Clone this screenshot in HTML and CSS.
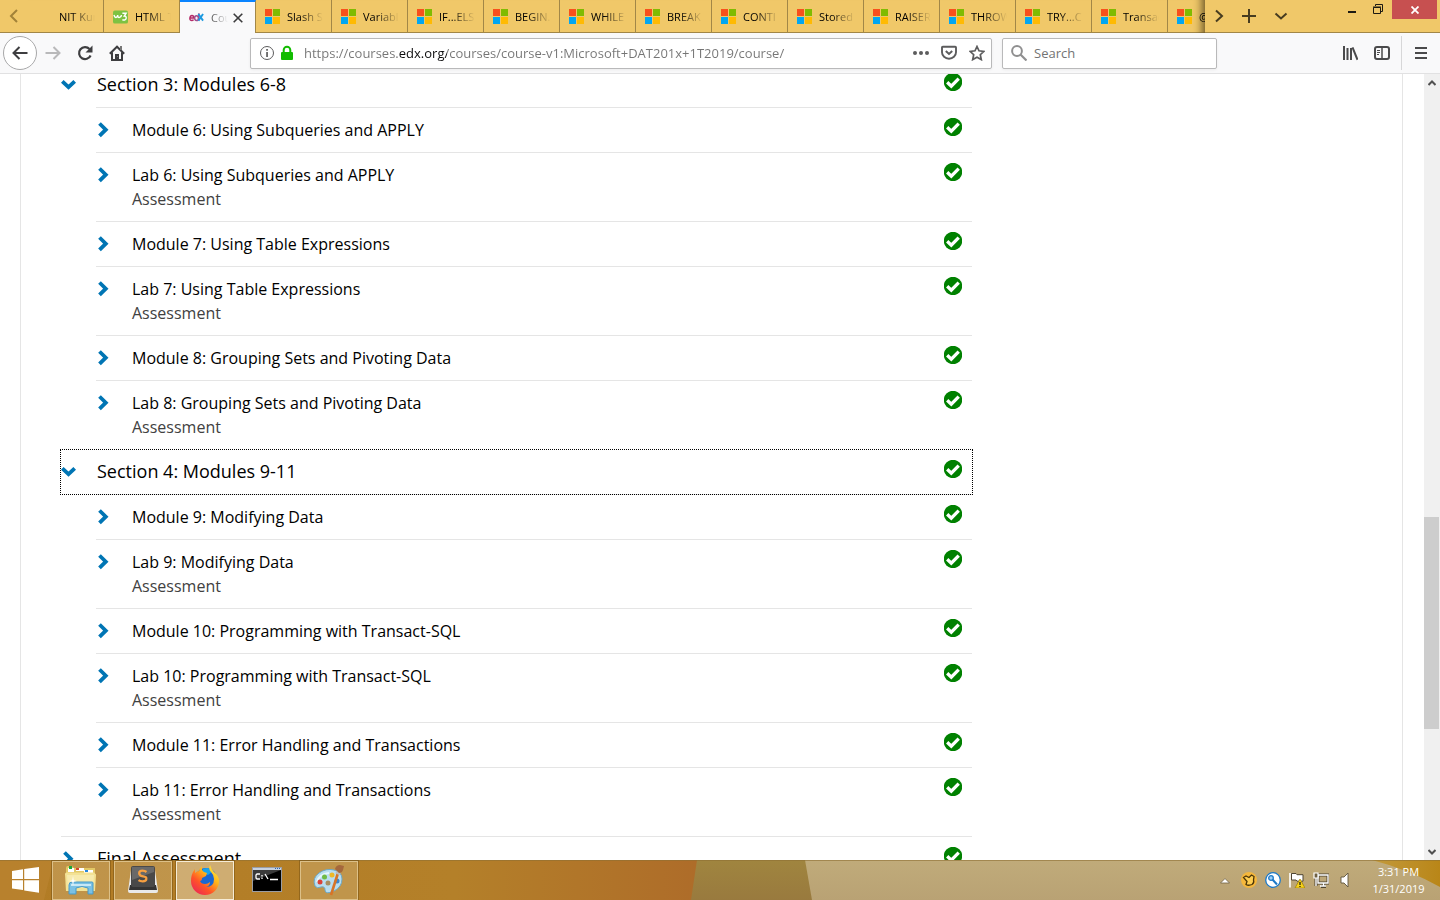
FILE: index.html
```html
<!DOCTYPE html>
<html lang="en">
<head>
<meta charset="utf-8">
<title>Course | edX</title>
<link rel="stylesheet" href="styles.css">
</head>
<body>
<svg class="sprite" aria-hidden="true">
  <symbol id="ms" viewBox="0 0 15 15"><path fill="#f8501c" d="M0 0h7v7H0z"/><path fill="#80bb01" d="M8 0h7v7H8z"/><path fill="#02a6f0" d="M0 8h7v7H0z"/><path fill="#ffba02" d="M8 8h7v7H8z"/></symbol>
  <symbol id="right" viewBox="0 0 16 16"><path d="M3.500 1.500 9.800 7.700l-6.300 6.200" fill="none" stroke="#0075b4" stroke-width="3.800"/></symbol>
  <symbol id="down" viewBox="0 0 16 16"><path d="M1.300 4.300 7.500 10.200 13.700 4.300" fill="none" stroke="#0075b4" stroke-width="3.800"/></symbol>
  <symbol id="ok" viewBox="0 0 18 18"><circle cx="9" cy="9" r="9.200" fill="#008100"/><path d="M3.200 9.200 7.300 13.200l7.400-7.600" fill="none" stroke="#fff" stroke-width="3.300"/></symbol>
</svg>

<header class="tabbar">
  <button class="scroll-left" aria-label="Scroll tabs left"><svg width="10" height="14" viewBox="0 0 10 14"><path d="M8 1 2 7l6 6" fill="none" stroke="#a28238" stroke-width="2"/></svg></button>
  <nav class="tabs" aria-label="Tabs">
    <a class="tab" href="#"><span class="favicon"></span><span class="tab-title">NIT Kur</span></a>
    <a class="tab" href="#"><svg class="favicon" viewBox="0 0 16 15"><rect y="1" width="16" height="14" rx="2" fill="#7dc242"/><path d="M1 6q1 3 2.500 2.500T5 6q0 3 2 2.500T9 6M10 4h4l-2 3q2.500 0 2 2.500t-4 1.500" fill="none" stroke="#fff" stroke-width="1.500"/></svg><span class="tab-title">HTML T</span></a>
    <a class="tab active" href="#"><svg class="favicon" viewBox="0 0 16 15"><g fill="none" stroke-width="1.600"><path d="M1 8h4.200Q5 5.300 3.200 5.300T1 8t2.200 2.700L5 10" stroke="#b52a67"/><path d="M10.500 3v8M10 8q0-2.500-2-2.500T6 8t2 2.700 2-2.700" stroke="#a0508f"/><path d="m10 3.800 5 7M15 3.800l-5 7" stroke="#1c9ae0" stroke-width="2"/></g></svg><span class="tab-title">Cou</span><svg class="close-tab" viewBox="0 0 10 10"><path d="m.7.700 8.600 8.600M9.300.700.700 9.300" stroke="#3b3b3c" stroke-width="1.600"/></svg></a>
    <a class="tab" href="#"><svg class="favicon"><use href="#ms"/></svg><span class="tab-title">Slash S</span></a>
    <a class="tab" href="#"><svg class="favicon"><use href="#ms"/></svg><span class="tab-title">Variabl</span></a>
    <a class="tab" href="#"><svg class="favicon"><use href="#ms"/></svg><span class="tab-title">IF...ELS</span></a>
    <a class="tab" href="#"><svg class="favicon"><use href="#ms"/></svg><span class="tab-title">BEGIN.</span></a>
    <a class="tab" href="#"><svg class="favicon"><use href="#ms"/></svg><span class="tab-title">WHILE</span></a>
    <a class="tab" href="#"><svg class="favicon"><use href="#ms"/></svg><span class="tab-title">BREAK</span></a>
    <a class="tab" href="#"><svg class="favicon"><use href="#ms"/></svg><span class="tab-title">CONTI</span></a>
    <a class="tab" href="#"><svg class="favicon"><use href="#ms"/></svg><span class="tab-title">Stored</span></a>
    <a class="tab" href="#"><svg class="favicon"><use href="#ms"/></svg><span class="tab-title">RAISER</span></a>
    <a class="tab" href="#"><svg class="favicon"><use href="#ms"/></svg><span class="tab-title">THROW</span></a>
    <a class="tab" href="#"><svg class="favicon"><use href="#ms"/></svg><span class="tab-title">TRY...C</span></a>
    <a class="tab" href="#"><svg class="favicon"><use href="#ms"/></svg><span class="tab-title">Transac</span></a>
    <a class="tab" href="#"><svg class="favicon"><use href="#ms"/></svg><span class="tab-title">@</span></a>
  </nav>
  <div class="tab-tools">
    <button aria-label="Scroll tabs right"><svg width="14" height="14" viewBox="0 0 14 14"><path d="m4 1.500 6 5.500-6 5.500" fill="none" stroke="#473c20" stroke-width="2"/></svg></button>
    <button aria-label="New tab"><svg width="14" height="14" viewBox="0 0 14 14"><path d="M7 0v14M0 7h14" stroke="#473c20" stroke-width="2"/></svg></button>
    <button aria-label="List all tabs"><svg width="14" height="14" viewBox="0 0 14 14"><path d="m1.500 4.500 5.500 5 5.500-5" fill="none" stroke="#473c20" stroke-width="2"/></svg></button>
  </div>
  <div class="window-tools">
    <button aria-label="Minimize"><svg width="10" height="19" viewBox="0 0 10 19"><path d="M1 11h8v2H1z" fill="#1d1a12"/></svg></button>
    <button aria-label="Restore"><svg width="10" height="19" viewBox="0 0 10 19"><path d="M.5 7.500h7v6h-7zM0 7h8M2.500 6V4.500h7v7H8" fill="none" stroke="#1d1a12"/></svg></button>
    <button class="close" aria-label="Close"><svg width="8" height="8" viewBox="0 0 8 8"><path d="m.5.500 7 7m0-7-7 7" stroke="#fff" stroke-width="1.800"/></svg></button>
  </div>
</header>

<div class="toolbar">
  <button class="tool back" aria-label="Back"><svg width="16" height="16" viewBox="0 0 16 16"><path d="M15.500 8H1.500M7.500 2l-6 6 6 6" fill="none" stroke="#3e3e40" stroke-width="2"/></svg></button>
  <button class="tool" aria-label="Forward" disabled><svg width="16" height="16" viewBox="0 0 16 16"><path d="M.5 8h14M8.500 2l6 6-6 6" fill="none" stroke="#b9b9ba" stroke-width="2"/></svg></button>
  <button class="tool" aria-label="Reload"><svg width="16" height="16" viewBox="0 0 16 16"><path d="M12.500 4A6 6 0 1 0 13.600 10.500" fill="none" stroke="#3e3e40" stroke-width="2.200"/><path d="M15.500.5v7h-7z" fill="#3e3e40"/></svg></button>
  <button class="tool" aria-label="Home"><svg width="16" height="16" viewBox="0 0 16 16"><path d="m.8 8.700 7.200-7 7.200 7M3 7.500v7.400h10V7.500" fill="none" stroke="#3e3e40" stroke-width="2"/><path d="M6 9h4v6H6z" fill="#3e3e40"/><path d="M8 11h1v1H8zM11 1h2v4h-2z" fill="#777"/></svg></button>
  <span class="spacer"></span>
  <div class="field address">
    <svg width="16" height="16" viewBox="0 0 16 16"><circle cx="8" cy="8" r="6.500" fill="none" stroke="#5c5c5d"/><path d="M7.200 7h1.700v5H7.200zM7.200 4h1.700v1.700H7.200z" fill="#5c5c5d"/></svg>
    <svg width="14" height="16" viewBox="0 0 14 16"><rect x="1" y="7" width="12" height="8" rx="1" fill="#12bc00"/><path d="M3.700 8V5a3.300 3.300 0 0 1 6.600 0v3" fill="none" stroke="#12bc00" stroke-width="2"/></svg>
    <input class="url" aria-label="Address" value="https://courses.edx.org/courses/course-v1:Microsoft+DAT201x+1T2019/course/">
    <button aria-label="Page actions"><svg width="16" height="16" viewBox="0 0 16 16"><g fill="#5c5c5d"><circle cx="2" cy="8" r="2"/><circle cx="8" cy="8" r="2"/><circle cx="14" cy="8" r="2"/></g></svg></button>
    <button aria-label="Save to Pocket"><svg width="16" height="16" viewBox="0 0 16 16"><path d="M1.800 1.800h12.400q.8 0 .8.800v4.600a7 6.500 0 0 1-14 0V2.600q0-.8.800-.8z" fill="none" stroke="#5c5c5d" stroke-width="1.900"/><path d="M4.800 6 8 9l3.200-3" fill="none" stroke="#5c5c5d" stroke-width="2"/></svg></button>
    <button aria-label="Bookmark"><svg width="16" height="16" viewBox="0 0 16 16"><path d="m8 1.500 2 4.300 4.900.6-3.600 3.300 1 4.900L8 12.200l-4.300 2.400 1-4.900L1.100 6.400 6 5.800z" fill="none" stroke="#5c5c5d" stroke-width="1.700"/></svg></button>
  </div>
  <div class="field search">
    <svg width="16" height="16" viewBox="0 0 16 16"><circle cx="6" cy="6" r="4.900" fill="none" stroke="#8f8f90" stroke-width="2"/><path d="m9.500 9.500 6 6" stroke="#8f8f90" stroke-width="2.200"/></svg>
    <input type="text" aria-label="Search" placeholder="Search">
  </div>
  <span class="spacer"></span>
  <button class="tool" aria-label="Library"><svg width="16" height="16" viewBox="0 0 16 16"><path d="M2 1v14M5.500 3v12M9 3v12M10.500 2.300l5 12.500" stroke="#4a4a4b" stroke-width="2"/></svg></button>
  <button class="tool" aria-label="Sidebars"><svg width="16" height="16" viewBox="0 0 16 16"><rect x="1" y="2" width="14" height="12" rx="2" fill="none" stroke="#4a4a4b" stroke-width="2"/><path d="M8 2v12" stroke="#4a4a4b" stroke-width="1.500"/><path d="M3 5.500h3M3 7.500h3M3 9.500h2" stroke="#4a4a4b"/></svg></button>
  <button class="tool menu" aria-label="Menu"><svg width="12" height="12" viewBox="0 0 12 12"><path d="M0 1h12M0 6h12M0 11h12" stroke="#4a4a4b" stroke-width="2"/></svg></button>
</div>

<div class="viewport">
  <main class="page">
    <ol class="outline">
      <li>
        <button class="section"><svg class="chev"><use href="#down"/></svg><span class="label">Section 3: Modules 6-8</span><svg class="ok"><use href="#ok"/></svg></button>
        <ol class="rows">
          <li><a class="row" href="#"><svg class="chev"><use href="#right"/></svg><span class="label">Module 6: Using Subqueries and APPLY</span><svg class="ok"><use href="#ok"/></svg></a></li>
          <li><a class="row" href="#"><svg class="chev"><use href="#right"/></svg><span class="label">Lab 6: Using Subqueries and APPLY<small>Assessment</small></span><svg class="ok"><use href="#ok"/></svg></a></li>
          <li><a class="row" href="#"><svg class="chev"><use href="#right"/></svg><span class="label">Module 7: Using Table Expressions</span><svg class="ok"><use href="#ok"/></svg></a></li>
          <li><a class="row" href="#"><svg class="chev"><use href="#right"/></svg><span class="label">Lab 7: Using Table Expressions<small>Assessment</small></span><svg class="ok"><use href="#ok"/></svg></a></li>
          <li><a class="row" href="#"><svg class="chev"><use href="#right"/></svg><span class="label">Module 8: Grouping Sets and Pivoting Data</span><svg class="ok"><use href="#ok"/></svg></a></li>
          <li><a class="row" href="#"><svg class="chev"><use href="#right"/></svg><span class="label">Lab 8: Grouping Sets and Pivoting Data<small>Assessment</small></span><svg class="ok"><use href="#ok"/></svg></a></li>
        </ol>
      </li>
      <li>
        <button class="section focused"><svg class="chev"><use href="#down"/></svg><span class="label">Section 4: Modules 9-11</span><svg class="ok"><use href="#ok"/></svg></button>
        <ol class="rows">
          <li><a class="row" href="#"><svg class="chev"><use href="#right"/></svg><span class="label">Module 9: Modifying Data</span><svg class="ok"><use href="#ok"/></svg></a></li>
          <li><a class="row" href="#"><svg class="chev"><use href="#right"/></svg><span class="label">Lab 9: Modifying Data<small>Assessment</small></span><svg class="ok"><use href="#ok"/></svg></a></li>
          <li><a class="row" href="#"><svg class="chev"><use href="#right"/></svg><span class="label">Module 10: Programming with Transact-SQL</span><svg class="ok"><use href="#ok"/></svg></a></li>
          <li><a class="row" href="#"><svg class="chev"><use href="#right"/></svg><span class="label">Lab 10: Programming with Transact-SQL<small>Assessment</small></span><svg class="ok"><use href="#ok"/></svg></a></li>
          <li><a class="row" href="#"><svg class="chev"><use href="#right"/></svg><span class="label">Module 11: Error Handling and Transactions</span><svg class="ok"><use href="#ok"/></svg></a></li>
          <li><a class="row" href="#"><svg class="chev"><use href="#right"/></svg><span class="label">Lab 11: Error Handling and Transactions<small>Assessment</small></span><svg class="ok"><use href="#ok"/></svg></a></li>
        </ol>
      </li>
      <li>
        <button class="section"><svg class="chev"><use href="#right"/></svg><span class="label">Final Assessment</span><svg class="ok"><use href="#ok"/></svg></button>
      </li>
    </ol>
  </main>
  <div class="scrollbar">
    <svg class="arrow" viewBox="0 0 8 6"><path d="M.5 5 4 1.500 7.500 5" fill="none" stroke="#505050" stroke-width="2"/></svg>
    <div class="track"><div class="thumb"></div></div>
    <svg class="arrow" viewBox="0 0 8 6"><path d="M.5 1 4 4.500 7.500 1" fill="none" stroke="#505050" stroke-width="2"/></svg>
  </div>
</div>

<footer class="taskbar">
  <svg class="wallpaper" viewBox="0 0 1440 40" preserveAspectRatio="none" aria-hidden="true">
    <defs>
      <linearGradient id="w1"><stop offset="0" stop-color="#b27c25"/><stop offset=".65" stop-color="#b48029"/><stop offset="1" stop-color="#ae6c29"/></linearGradient>
      <linearGradient id="w2" x2="0" y2="1"><stop offset="0" stop-color="#a0853f"/><stop offset="1" stop-color="#997a3e"/></linearGradient>
      <linearGradient id="w3" x2="0" y2="1"><stop offset="0" stop-color="#c0ab7a"/><stop offset="1" stop-color="#b9a274"/></linearGradient>
      <linearGradient id="w4"><stop offset="0" stop-color="#c39a3c"/><stop offset="1" stop-color="#b98618"/></linearGradient>
    </defs>
    <path fill="url(#w1)" d="M0 0h700v40H0z"/>
    <path fill="#c18a3a" opacity=".4" d="M0 0h54L44 40H0z"/>
    <path fill="url(#w2)" d="M697 0h120v40H691z"/>
    <path fill="url(#w3)" d="M805 0h635v40H812z"/>
    <path fill="url(#w4)" d="M1372 0h68v27q-30-17-68-27z"/>
    <path fill="#8e6f33" d="M0 0h1440v1H0z" opacity=".6"/>
  </svg>
  <button class="start" aria-label="Start"><svg width="28" height="26" viewBox="0 0 28 26"><path d="m0 4 11-1.700V12H0zM12.200 2 27 0v12H12.200zM0 13.200h11v9.700L0 21.500zM12.200 13.200H27v12.600l-14.800-2.400z" fill="#fff"/></svg></button>
  <button class="app open" aria-label="File Explorer"><svg width="34" height="32" viewBox="0 0 34 32"><path d="M2 4q0-2 2-2h4l2 2h21v22H2z" fill="#e2c866"/><path d="M4 4h6v4H4z" fill="#fff"/><path d="M5 2h3v3H5z" fill="#18a83c"/><path d="M12 4h8v3h-8z" fill="#fff"/><path d="M12 4h3v2h-3z" fill="#d9442b"/><path d="M20 6h9v3h-9z" fill="#fff"/><path d="M21 6h3v2h-3z" fill="#2688dc"/><path d="M1 10q0-1.500 1.500-1.500H30l2 2L31 27H2z" fill="#f3e295"/><path d="M3 11h27l-1 13H4z" fill="#f7ebae"/><path d="M8 18h20q1 0 1 1v11h-5v-6q-6-3-12 0v6H5v-9q0-3 3-3z" fill="#7bc1e4" stroke="#4799c8"/><path d="M7 20h20v2H7z" fill="#c8e8f6"/><path d="m9 12 .7 4.300L13 17l-3.300.7L9 22l-.7-4.300L5 17l3.300-.7z" fill="#fff"/></svg></button>
  <button class="app open" aria-label="Sublime Text"><svg width="32" height="32" viewBox="0 0 32 32"><path d="M4 6h24l3 21q0 2-2 2H3q-2 0-2-2z" fill="#e9e9e9"/><path d="M3 21h26l1 5H2z" fill="#343434"/><rect x="4" y="2" width="24" height="21" rx="2" fill="#494949"/><path d="M5 3h22v5L5 16z" fill="#696969"/><path d="M19.500 8q-1.600-1.300-4-1.300-3.300 0-3.300 2.600t3.800 3 3.300 2.700q0 2.300-3.600 2.300-2.600 0-4.200-1.200" fill="none" stroke="#f7a041" stroke-width="2.300"/></svg></button>
  <button class="app open current" aria-label="Firefox"><svg width="32" height="32" viewBox="0 0 32 32"><defs><linearGradient id="fx" x1=".9" y1="0" x2=".1" y2="1"><stop offset="0" stop-color="#fff04a"/><stop offset=".35" stop-color="#ffb51b"/><stop offset=".65" stop-color="#ff5427"/><stop offset="1" stop-color="#e9205e"/></linearGradient></defs><circle cx="17" cy="15" r="11" fill="#1a67d2"/><path d="M14 5q6-3 10 2l-5 4-6-2z" fill="#18a2ec"/><path d="M21 1q1 4 4 7 5 4 5 9a14 14 0 0 1-28 0Q2 10 6 5v4q2-2 4-2 0-3 3-5-1 4 2 6l3 1-1 3-4 2q0 3-2 3 1 3 5 3 3 0 5-2 0 4-4 5 8 0 8-8 0-4-3-7-3-3-1-7z" fill="url(#fx)"/></svg></button>
  <button class="app" aria-label="Command Prompt"><svg width="30" height="26" viewBox="0 0 30 26"><path d="M0 0h30v25H0z" fill="#9a9da4"/><path d="M1 1h28v2H1z" fill="#c7d1df"/><path d="M1 3h28v21H1z" fill="#000"/><path d="M1 3h28L1 14z" fill="#3a3a3a"/><path d="M8 7H5L4 8v3l1 1h3M10 8v1.500M10 10.500V12M13 7l3 5M18 12.500h8" fill="none" stroke="#fff" stroke-width="1.300"/><path d="M23 1h1v1h-1zM25 1h1v1h-1zM27 1h1v1h-1z" fill="#2764b4"/></svg></button>
  <button class="app open" aria-label="Paint"><svg width="34" height="32" viewBox="0 0 34 32"><path d="M3 22Q0 14 7 9t15-3q8 2 8 9 0 8-8 12-9 4-9-1 0-4-4-3-4 2-6-1z" fill="#b9def0" stroke="#6ca9c9"/><path d="M5 18q2-8 12-9" fill="none" stroke="#e6f6fc" stroke-width="2"/><circle cx="8" cy="18" r="2.500" fill="#db4239"/><circle cx="12.500" cy="13" r="2.500" fill="#6fbb45"/><circle cx="20" cy="11" r="2.500" fill="#efb827"/><circle cx="25" cy="17" r="2.500" fill="#3c86cc"/><circle cx="16" cy="19" r="2.500" fill="#a98e60"/><path d="M26 9 19 31" stroke="#d87427" stroke-width="2.600"/><path d="m24 8 4 2" stroke="#b9bdc0" stroke-width="3"/><path d="M23 5q1-4 5-4l4 1-1 4q-1 3-4 3z" fill="#a5683c"/></svg></button>
  <div class="tray">
    <button aria-label="Show hidden icons"><svg width="16" height="16" viewBox="0 0 16 16"><path d="m3.500 11 4.500-4.500 4.500 4.500z" fill="#fff" stroke="#6e6042" stroke-width=".8"/></svg></button>
    <button aria-label="Updates"><svg width="16" height="16" viewBox="0 0 16 16"><circle cx="8" cy="8" r="8" fill="#f5b73c"/><path d="M2.500 5.500 5 4l3 1.500L10.500 3 13 4.500 12.500 8q1 3-1.500 4.500-3.500 1.500-6 0L6 9.500z" fill="#ffce52" stroke="#4b3609" stroke-width="1.300"/></svg></button>
    <button aria-label="Search tool"><svg width="16" height="16" viewBox="0 0 16 16"><circle cx="8" cy="8" r="7.300" fill="#fff" stroke="#1c79c9" stroke-width="1.300"/><circle cx="6" cy="6" r="2.300" fill="#9ed0f5" stroke="#1c79c9" stroke-width="1.300"/><path d="m7.500 7.500 4.500 5" stroke="#1c79c9" stroke-width="2"/></svg></button>
    <button aria-label="Action Center"><svg width="16" height="16" viewBox="0 0 16 16"><path d="M1 1v14.500" stroke="#fff" stroke-width="1.600"/><path d="M2.500 1.500H7l1 1.200h6v6.500H8L7 8H2.500z" fill="#fff" stroke="#4e4432"/><path d="m11 7 5 9H6z" fill="#f6d21a" stroke="#9d7c00" stroke-width=".7"/><path d="M10.400 10h1.200v3h-1.200zM10.400 14h1.200v1h-1.200z" fill="#111"/></svg></button>
    <button aria-label="Network"><svg width="16" height="16" viewBox="0 0 16 16"><path d="M5 3h10v8H5zM8 14.500h5M10.500 11v3M3 6v8" fill="none" stroke="#4e4432" stroke-width="3"/><path d="M5 3h10v8H5zM7 14h6M10.500 11v3M3 6v8" fill="none" stroke="#fff" stroke-width="1.400"/><path d="M1 1h4v5H1z" fill="#6e6042" stroke="#fff" stroke-width="1.200"/></svg></button>
    <button aria-label="Volume"><svg width="16" height="16" viewBox="0 0 16 16"><path d="M4 5h3l4-4v14l-4-4H4z" fill="#fff" stroke="#5e523b" stroke-width=".9"/></svg></button>
  </div>
  <time class="clock" datetime="2019-01-31T15:31">3:31 PM<br>1/31/2019</time>
</footer>
</body>
</html>
```

FILE: styles.css
```css
* { box-sizing: border-box; }

body {
  margin: 0;
  height: 100vh;
  display: flex;
  flex-direction: column;
  overflow: hidden;
  background: #fff;
  font-family: "Open Sans", "Noto Sans", sans-serif;
  color: #000;
}

button, input { font: inherit; color: inherit; }
button { display: flex; align-items: center; justify-content: center; border: 0; padding: 0; background: none; }
a { color: inherit; text-decoration: none; }
svg { display: block; flex: none; }
ol { list-style: none; margin: 0; padding: 0; }
.sprite { position: absolute; width: 0; height: 0; }

/* Tab strip */
.tabbar { display: flex; height: 33px; flex: none; background: #f0c869; box-shadow: inset 0 -1px #a28747; }
.scroll-left { width: 28px; height: 32px; }
.tabs { display: flex; flex: 1; min-width: 0; overflow: hidden; box-shadow: inset -12px 0 9px -9px #6b5627; }
.tab {
  display: flex;
  align-items: center;
  flex: none;
  gap: 7px;
  width: 76px;
  height: 33px;
  padding: 0 8px 0 9px;
  border-right: 1px solid #a28747;
  font-size: 11px;
}
.favicon { width: 15px; height: 15px; flex: none; }
.tab-title {
  flex: 1;
  min-width: 0;
  overflow: hidden;
  white-space: nowrap;
  -webkit-mask-image: linear-gradient(to left, transparent, #000 24px);
  mask-image: linear-gradient(to left, transparent, #000 24px);
}
.tab.active { padding-right: 12px; background: #f9f9fa; border-top: 2px solid #0a84ff; }
.active .tab-title { margin-right: -2px; }
.close-tab { width: 10px; height: 10px; }
.tab-tools { display: flex; height: 32px; }
.tab-tools button { width: 32px; }
.tab-tools button:first-child { width: 28px; }
.window-tools { display: flex; align-items: flex-start; gap: 16px; padding: 0 3px 0 50px; }
.window-tools .close { width: 45px; height: 19px; margin-left: -7px; background: #c75050; }

/* Navigation toolbar */
.toolbar {
  display: flex;
  align-items: center;
  flex: none;
  height: 41px;
  padding-left: 3px;
  background: #f9f9fa;
  border-bottom: 1px solid #e1e1e2;
}
.tool { width: 32px; height: 34px; }
.tool.back { width: 34px; border: 1px solid #a8a8a9; border-radius: 50%; background: #fff; }
.tool.menu { width: 39px; margin-left: 3px; border-left: 1px solid #d7d7d8; }
.spacer { flex: 0 1 117px; }
.field {
  display: flex;
  align-items: center;
  height: 31px;
  background: #fff;
  border: 1px solid #b9b9ba;
  border-radius: 2px;
  box-shadow: 0 1px 3px rgba(0, 0, 0, 0.06);
}
.field input { flex: 1; min-width: 0; padding: 0; border: 0; outline: 0; background: none; font-size: 13px; }
.field input::placeholder { color: #737373; opacity: 1; }
.address { flex: 1; gap: 5px; padding: 0 6px 0 8px; }
.address button { width: 16px; margin-left: 7px; }
.address .url {
  margin-left: 5px;
  color: transparent;
  background: linear-gradient(to right, #757575 94px, #0c0c0d 94px, #0c0c0d 143px, #757575 143px);
  -webkit-background-clip: text;
  background-clip: text;
}
.search { flex: 0 0 215px; margin-left: 10px; padding: 0 8px; gap: 7px; }

/* Course outline */
.viewport { display: flex; flex: 1; min-height: 0; overflow: hidden; }
.page { flex: 1; margin: 0 21px 0 20px; padding: 0 40px; border: solid #e5e5e5; border-width: 0 1px; }
.outline { width: 70%; margin-top: -12px; }
.section, .row {
  display: flex;
  align-items: flex-start;
  width: 100%;
  padding: 10px 10px 10px 0;
  line-height: 24px;
  text-align: left;
}
.section { padding-bottom: 11px; font-size: 18px; border-top: 1px solid #e5e5e5; line-height: 23px; }
.section.focused { margin-top: 1px; border-top: 0; outline: 1px dotted #000; }
.rows { margin-left: 35px; }
.row { border-top: 1px solid #e5e5e5; font-size: 16px; }
.label { flex: 1; }
.label small { display: block; font-size: 16px; color: #414141; }
.chev { width: 16px; height: 16px; margin: 4px 20px 0 0; }
.ok { width: 18px; height: 18px; }

/* Scrollbar */
.scrollbar { display: flex; flex-direction: column; align-items: center; width: 16px; padding: 6px 0 5px; background: #f0f0f0; }
.arrow { width: 8px; height: 6px; }
.track { flex: 1; width: 100%; padding: 0 1px 0 0; }
.thumb { height: 212px; margin-top: 431px; background: #cdcdcd; }

/* Taskbar */
.taskbar { position: relative; display: flex; align-items: center; gap: 4px; flex: none; height: 40px; background: #b9a274; }
.wallpaper { position: absolute; inset: 0; width: 100%; height: 100%; }
.taskbar > :not(.wallpaper) { position: relative; }
.start { width: 48px; height: 40px; padding-left: 3px; }
.app { width: 58px; height: 39px; }
.app.open { border: 1px solid #dcc088; background: rgba(222, 202, 160, 0.3); box-shadow: 0 0 0 1px rgba(90, 60, 10, 0.35); }
.app.current { border-color: #f6ecd6; background: rgba(235, 220, 190, 0.5); }
.tray { display: flex; gap: 8px; margin-left: auto; }
.clock { width: 83px; color: #fff; font-size: 11px; line-height: 17px; text-align: center; }
```
